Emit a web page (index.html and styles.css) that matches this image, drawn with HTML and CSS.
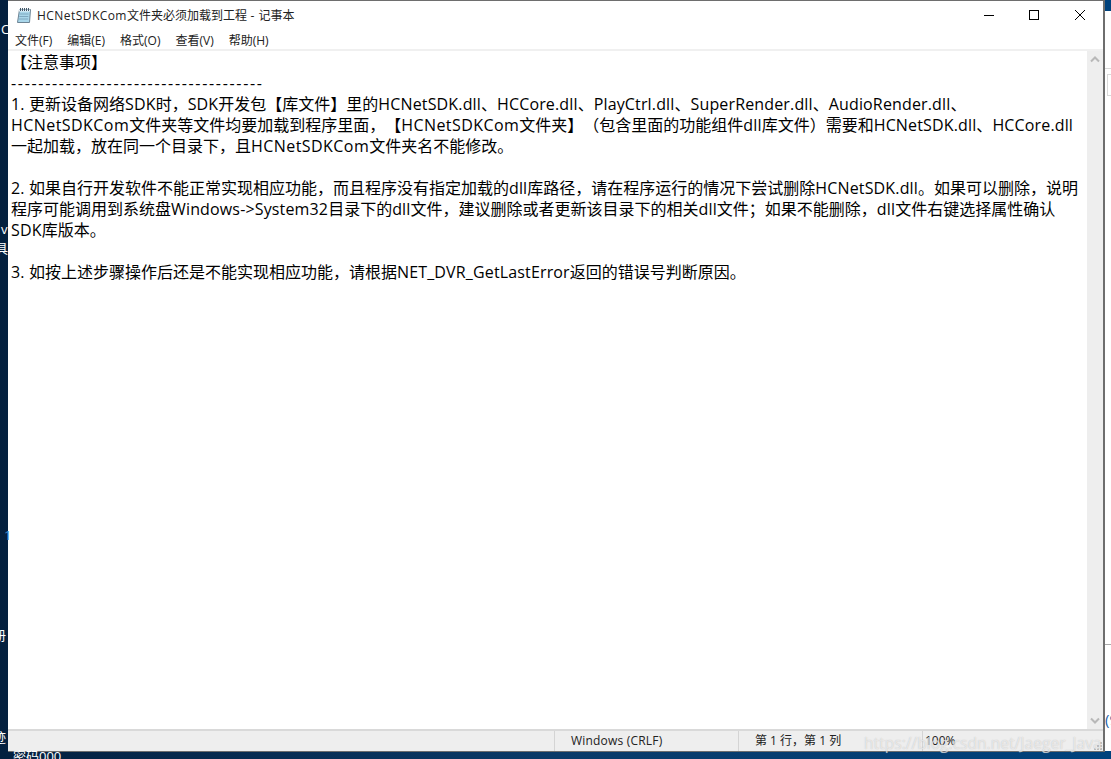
FILE: index.html
```html
<!DOCTYPE html>
<html lang="zh-CN">
<head>
  <meta charset="UTF-8">
  <title>HCNetSDKCom文件夹必须加载到工程 - 记事本</title>
  <link rel="stylesheet" href="styles.css">
</head>
<body>
  <!-- window behind notepad, only its left edge shows -->
  <div class="back-window">
    <div class="back-rule"></div>
    <div class="back-box"></div>
    <div class="back-rule2"></div>
    <span class="back-text">(9</span>
  </div>

  <div class="window">
    <header class="titlebar">
      <svg class="app-icon" width="16" height="17" viewBox="0 0 16 17">
        <path d="M3.5 2.5h11l-1 13h-12z" fill="#a9d6ea" stroke="#6d8494"/>
        <path d="M3 3.5h11" stroke="#e8f2f8" stroke-width="2"/>
        <path d="M4.5 1v3M6.5 1v3M8.5 1v3M10.5 1v3M12.5 1v3" stroke="#44596a"/>
        <path d="M3.5 7h9M3.3 9.5h9M3.1 12h9" stroke="#7fa8c0"/>
      </svg>
      <span class="title"><span class="en-t">HCNetSDKCom</span>文件夹必须加载到工程<span class="en-t"> - </span>记事本</span>
      <div class="controls">
        <svg width="46" height="28" viewBox="0 0 46 28"><path d="M19 14.5h10" stroke="#000"/></svg>
        <svg width="46" height="28" viewBox="0 0 46 28"><rect x="18.5" y="9.5" width="9" height="9" fill="none" stroke="#000"/></svg>
        <svg width="46" height="28" viewBox="0 0 46 28"><path d="M18 9l10 10M28 9L18 19" stroke="#000" fill="none"/></svg>
      </div>
    </header>
    <nav class="menubar">
      <span>文件(F)</span>
      <span>编辑(E)</span>
      <span>格式(O)</span>
      <span>查看(V)</span>
      <span>帮助(H)</span>
    </nav>
    <div class="editor">
      <div class="text">
        <p>【注意事项】</p>
        <p class="dashes">-------------------------------------</p>
        <p><span class="en">1. </span>更新设备网络<span class="en">SDK</span>时，<span class="en">SDK</span>开发包【库文件】里的<span class="en">HCNetSDK.dll</span>、<span class="en">HCCore.dll</span>、<span class="en">PlayCtrl.dll</span>、<span class="en">SuperRender.dll</span>、<span class="en">AudioRender.dll</span>、</p>
        <p><span class="en-wide">HCNetSDKCom</span>文件夹等文件均要加载到程序里面，【<span class="en-wide">HCNetSDKCom</span>文件夹】（包含里面的功能组件<span class="en">dll</span>库文件）需要和<span class="en">HCNetSDK.dll</span>、<span class="en">HCCore.dll</span></p>
        <p>一起加载，放在同一个目录下，且<span class="en-wide">HCNetSDKCom</span>文件夹名不能修改。</p>
        <p>&nbsp;</p>
        <p><span class="en">2. </span>如果自行开发软件不能正常实现相应功能，而且程序没有指定加载的<span class="en">dll</span>库路径，请在程序运行的情况下尝试删除<span class="en">HCNetSDK.dll</span>。如果可以删除，说明</p>
        <p>程序可能调用到系统盘<span class="en">Windows-&gt;System32</span>目录下的<span class="en">dll</span>文件，建议删除或者更新该目录下的相关<span class="en">dll</span>文件；如果不能删除，<span class="en">dll</span>文件右键选择属性确认</p>
        <p><span class="en">SDK</span>库版本。</p>
        <p>&nbsp;</p>
        <p><span class="en">3. </span>如按上述步骤操作后还是不能实现相应功能，请根据<span class="en">NET_DVR_GetLastError</span>返回的错误号判断原因。</p>
      </div>
      <div class="scrollbar">
        <svg width="16" height="17" viewBox="0 0 16 17"><path d="M4 10.5l4-4 4 4" fill="none" stroke="#b8b8b8" stroke-width="2"/></svg>
        <svg width="16" height="17" viewBox="0 0 16 17"><path d="M4 6.5l4 4 4-4" fill="none" stroke="#b8b8b8" stroke-width="2"/></svg>
      </div>
    </div>
    <footer class="statusbar">
      <span class="cell cell-blank"></span>
      <span class="cell cell-crlf">Windows (CRLF)</span>
      <span class="cell cell-pos">第 1 行，第 1 列</span>
      <span class="cell cell-zoom">100%</span>
      <svg class="grip" width="10" height="10" viewBox="0 0 10 10">
        <path d="M7 1h2v2H7zM4 4h2v2H4zM7 4h2v2H7zM1 7h2v2H1zM4 7h2v2H4zM7 7h2v2H7z" fill="#bdbdbd"/>
      </svg>
    </footer>
  </div>

  <span class="desk-text desk-a">C</span>
  <span class="desk-text desk-b">v</span>
  <span class="desk-text desk-c">具</span>
  <span class="desk-text desk-d">1</span>
  <span class="desk-text desk-e">册</span>
  <span class="desk-text desk-f">迹</span>
  <span class="desk-text desk-g">密码000</span>
  <span class="watermark">https://blog.csdn.net/Jaeger_Java</span>
</body>
</html>
```
FILE: styles.css
```css
* { box-sizing: border-box; margin: 0; padding: 0; }
body {
  width: 1111px;
  height: 759px;
  overflow: hidden;
  position: relative;
  background: linear-gradient(90deg, #04203f 0%, #0a3a68 50%, #00427c 100%);
  font-family: "Open Sans", "Noto Sans CJK SC", sans-serif;
  text-spacing-trim: space-all;
}
.window {
  width: 1095px;
  height: 750px;
  margin: 1px 0 0 8px;
  background: #fff;
  display: flex;
  flex-direction: column;
  box-shadow: 1px 0 0 1px #6e6e6e;
  position: relative;
}
.titlebar {
  height: 28px;
  display: flex;
  align-items: center;
  padding-left: 8px;
  font-size: 12px;
  color: #222;
}
.app-icon { margin-right: 5px; }
.en-t { letter-spacing: .45px; }
.controls { margin-left: auto; display: flex; }
.controls svg { display: block; }
.menubar {
  height: 22px;
  display: flex;
  align-items: center;
  gap: 15px;
  padding: 2px 0 0 7px;
  font-size: 12px;
  color: #222;
  border-bottom: 2px solid #f0f0f0;
}
.editor { flex: 1; display: flex; min-height: 0; }
.text {
  flex: 1;
  padding: 1px 0 0 3px;
  font-size: 16px;
  line-height: 21px;
  white-space: nowrap;
  overflow: hidden;
  color: #000;
}
.en { letter-spacing: .15px; }
.en-wide { letter-spacing: .44px; }
.dashes { letter-spacing: 1.68px; }
.scrollbar {
  width: 16px;
  background: #eeeeee;
  display: flex;
  flex-direction: column;
  justify-content: space-between;
}
.statusbar {
  height: 22px;
  display: flex;
  background: #eeeeee;
  border-top: 2px solid #d9d9d9;
  font-size: 12px;
  line-height: 20px;
  color: #222;
  position: relative;
}
.cell { border-left: 1px solid #d4d4d4; padding-left: 16px; }
.cell-blank { width: 546px; border-left: 0; }
.cell-crlf { width: 184px; letter-spacing: .2px; }
.cell-pos { width: 184px; }
.cell-zoom { flex: 1; padding-left: 2px; }
.grip { position: absolute; right: 0; bottom: 0; }

.back-window {
  position: absolute;
  left: 1000px;
  top: 11px;
  width: 111px;
  height: 740px;
  background: #fff;
}
.back-rule {
  position: absolute;
  left: 0;
  right: 0;
  top: 57px;
  height: 1px;
  background: #d9d9d9;
}
.back-box {
  position: absolute;
  left: 107px;
  top: 63px;
  width: 8px;
  height: 22px;
  border: 1px solid #d9d9d9;
}
.back-rule2 {
  position: absolute;
  left: 0;
  right: 0;
  top: 633px;
  height: 1px;
  background: #aaa;
}
.back-text {
  position: absolute;
  left: 105px;
  top: 699px;
  font-size: 15px;
  line-height: 18px;
  color: #1c5fa8;
}

.desk-text {
  position: absolute;
  font-size: 13px;
  line-height: 15px;
  color: #fff;
}
.desk-a { left: 1px; top: 22px; }
.desk-b { left: 1px; top: 222px; }
.desk-c { left: -5px; top: 241px; }
.desk-d { left: 4px; top: 528px; color: #3f8fd0; }
.desk-e { left: -7px; top: 628px; }
.desk-f { left: -7px; top: 730px; }
.desk-g { left: 13px; top: 749px; }
.watermark {
  position: absolute;
  left: 864px;
  top: 732px;
  font-size: 15.6px;
  color: rgba(255, 255, 255, .6);
  text-shadow: 0 0 1px rgba(150, 150, 150, .6);
}
```
